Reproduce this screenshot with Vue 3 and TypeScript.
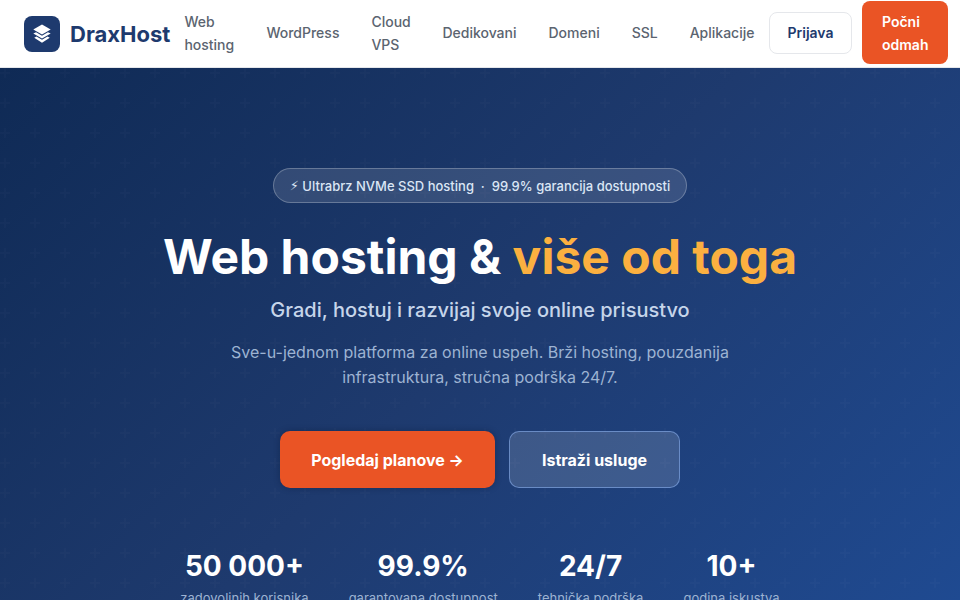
<script setup lang="ts">
const links = ['Web hosting', 'WordPress', 'Cloud VPS', 'Dedikovani', 'Domeni', 'SSL', 'Aplikacije']

const stats = [
  { value: '50 000+', label: 'zadovoljnih korisnika' },
  { value: '99.9%', label: 'garantovana dostupnost' },
  { value: '24/7', label: 'tehnička podrška' },
  { value: '10+', label: 'godina iskustva' },
]
</script>

<template>
  <div class="page">
    <header class="topbar">
      <a class="brand" href="#">
        <span class="brand-mark">
          <svg viewBox="0 0 24 24" width="22" height="22" aria-hidden="true" fill="#fff">
            <path d="M12 1.500 21.500 7 12 12.500 2.500 7z" />
            <path d="M2.500 11.500 5.500 10 12 13.800 18.500 10 21.500 11.500 12 17z" />
            <path d="M3.500 16 6 14.800 12 18.300 18 14.800 20.500 16 12 21.500z" />
          </svg>
        </span>
        <span class="brand-name">DraxHost</span>
      </a>
      <nav class="links">
        <a v-for="link in links" :key="link" href="#">{{ link }}</a>
      </nav>
      <div class="actions">
        <button class="btn-login">Prijava</button>
        <button class="btn-start">Počni odmah</button>
      </div>
    </header>

    <section class="hero">
      <div class="badge"><span class="bolt">⚡&#xFE0E;</span> Ultrabrz NVMe SSD hosting &nbsp;·&nbsp; 99.9% garancija dostupnosti</div>
      <h1>Web hosting &amp; <span>više od toga</span></h1>
      <p class="sub">Gradi, hostuj i razvijaj svoje online prisustvo</p>
      <p class="desc">Sve-u-jednom platforma za online uspeh. Brži hosting, pouzdanija infrastruktura, stručna podrška 24/7.</p>
      <div class="cta">
        <button class="cta-main">Pogledaj planove →</button>
        <button class="cta-ghost">Istraži usluge</button>
      </div>
      <div class="stats">
        <div v-for="stat in stats" :key="stat.value" class="stat">
          <strong>{{ stat.value }}</strong>
          <span>{{ stat.label }}</span>
        </div>
      </div>
    </section>
  </div>
</template>

<style>
html,
body {
  margin: 0;
  height: 100%;
  overflow: hidden;
}
</style>

<style scoped>
.page {
  height: 600px;
  overflow: hidden;
  font-family: Inter, "Liberation Sans", sans-serif;
  background: #fff;
}

.topbar {
  box-sizing: border-box;
  height: 68px;
  padding: 0 12px 0 24px;
  display: flex;
  align-items: center;
  background: #fff;
  border-bottom: 1px solid #e5e7eb;
}

.brand {
  display: flex;
  align-items: center;
  gap: 10px;
  text-decoration: none;
  flex: none;
}

.brand-mark {
  width: 36px;
  height: 36px;
  border-radius: 8px;
  background: #1e3a6e;
  display: flex;
  align-items: center;
  justify-content: center;
}

.brand-name {
  font-size: 22px;
  font-weight: 700;
  color: #1e3a6e;
}

.links {
  display: flex;
  align-items: center;
  gap: 32px;
  margin: 0 0 2px 14px;
  flex: 1;
}

.links a {
  font-size: 14px;
  font-weight: 500;
  line-height: 23px;
  color: #5b6470;
  text-decoration: none;
}

.links a:nth-child(1) {
  width: 50px;
}

.links a:nth-child(3) {
  width: 39px;
}

.actions {
  display: flex;
  align-items: center;
  gap: 10px;
  flex: none;
  margin-bottom: 2px;
}

.actions button {
  font-family: inherit;
  font-size: 14px;
  font-weight: 600;
  line-height: 23px;
  border-radius: 8px;
}

.btn-login {
  width: 83px;
  height: 42px;
  padding: 0;
  background: #fff;
  color: #1e3a6e;
  border: 1px solid #e5e7eb;
}

.btn-start {
  width: 86px;
  height: 63px;
  padding: 0 20px;
  text-align: left;
  background: #ea5425;
  color: #fff;
  border: 0;
}

.hero {
  box-sizing: border-box;
  height: 532px;
  padding-top: 100px;
  display: flex;
  flex-direction: column;
  align-items: center;
  text-align: center;
  background-color: #0f2a55;
  background-image:
    url("data:image/svg+xml,%3Csvg xmlns='http://www.w3.org/2000/svg' width='60' height='60'%3E%3Cpath d='M36 34v-4h-2v4h-4v2h4v4h2v-4h4v-2zm0-30V0h-2v4h-4v2h4v4h2V6h4V4zM6 34v-4H4v4H0v2h4v4h2v-4h4v-2zM6 4V0H4v4H0v2h4v4h2V6h4V4z' fill='%23fff' fill-opacity='.015'/%3E%3C/svg%3E"),
    linear-gradient(135deg, #0f2a55 0%, #1e3a6e 50%, #1f4a91 100%);
}

.hero > * {
  flex: none;
}

.badge {
  box-sizing: border-box;
  height: 35px;
  padding: 0 16px;
  display: flex;
  align-items: center;
  white-space: pre;
  font-size: 13px;
  font-weight: 500;
  color: #dbe6f5;
  background: rgba(255, 255, 255, 0.12);
  border: 1px solid rgba(255, 255, 255, 0.25);
  border-radius: 18px;
}

.bolt {
  font-family: "DejaVu Sans", sans-serif;
  font-weight: 400;
}

h1 {
  margin: 24px 0 0;
  font-size: 48px;
  line-height: 60px;
  font-weight: 700;
  color: #fff;
}

h1 span {
  color: #fbb040;
}

.sub {
  margin: 7px 0 0;
  font-size: 20px;
  line-height: 32px;
  font-weight: 500;
  color: #c6d5ea;
}

.desc {
  margin: 13.6px 0 0;
  width: 560px;
  font-size: 16px;
  line-height: 25.6px;
  color: #9db3d2;
}

.cta {
  margin-top: 40.4px;
  display: flex;
  gap: 14px;
}

.cta button {
  box-sizing: border-box;
  height: 57px;
  font-family: inherit;
  font-size: 16px;
  font-weight: 700;
  color: #fff;
  border-radius: 10px;
}

.cta-main {
  width: 215px;
  background: #ea5425;
  border: 0;
  box-shadow: 0 0 6px rgba(10, 20, 50, 0.35);
}

.cta-ghost {
  width: 171px;
  background: rgba(255, 255, 255, 0.14);
  border: 1px solid rgba(150, 190, 255, 0.5);
}

.stats {
  margin-top: 58px;
  display: flex;
  gap: 40px;
}

.stat {
  display: flex;
  flex-direction: column;
  align-items: center;
}

.stat strong {
  font-size: 28px;
  line-height: 40px;
  font-weight: 700;
  color: #fff;
}

.stat span {
  margin-top: 4px;
  font-size: 13px;
  color: #9db3d2;
}
</style>
